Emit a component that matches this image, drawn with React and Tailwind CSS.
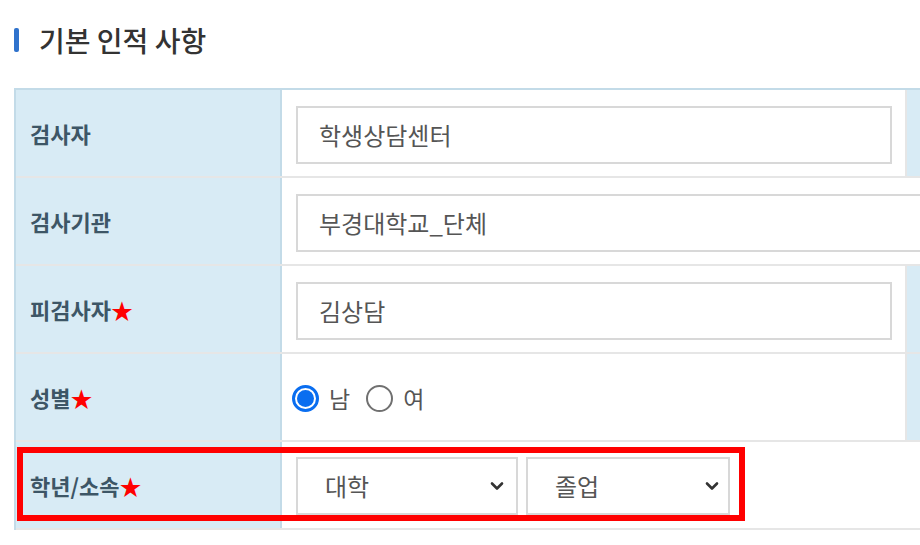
import React, { useState } from 'react';

const font = { fontFamily: '"Malgun Gothic", "Noto Sans CJK KR", "Noto Sans", sans-serif' };

function Label({ text, required }) {
  return (
    <div className="w-[266px] shrink-0 bg-[#d8ebf5] border-r-2 border-[#c3dbe8] flex items-center pl-[14px] text-[22px] font-bold text-[#3d5666]">
      {text}
      {required && <span className="text-[#ff0000] text-[22px] leading-none">★</span>}
    </div>
  );
}

function Chevron() {
  return (
    <svg width="14" height="10" viewBox="0 0 14 10" className="shrink-0">
      <path d="M2 2.5 L7 7.5 L12 2.5" fill="none" stroke="#333" strokeWidth="2.6" strokeLinecap="round" strokeLinejoin="round" />
    </svg>
  );
}

function Radio({ checked, onClick }) {
  return (
    <button onClick={onClick} className="w-[27px] h-[27px] flex items-center justify-center">
      {checked ? (
        <span className="w-[27px] h-[27px] rounded-full border-[3px] border-[#0a6ef0] flex items-center justify-center">
          <span className="w-[17px] h-[17px] rounded-full bg-[#0a6ef0]" />
        </span>
      ) : (
        <span className="w-[27px] h-[27px] rounded-full border-[2.5px] border-[#707070] bg-white" />
      )}
    </button>
  );
}

export default function App() {
  const [gender, setGender] = useState('M');

  return (
    <div className="w-[920px] h-[545px] overflow-hidden bg-white relative" style={font}>
      {/* Title */}
      <div className="flex items-start pl-[14px] pt-[26px] h-[88px]">
        <div className="flex items-center gap-[20px]">
          <span className="w-[5px] h-[24px] bg-[#2f72cc] rounded-[2px]" />
          <h2 className="text-[28px] font-medium text-[#333] leading-none">기본 인적 사항</h2>
        </div>
      </div>

      {/* Table */}
      <div className="ml-[14px] w-[1000px] border-t-2 border-l-2 border-[#c3dbe8]">
        {/* row 1 */}
        <div className="flex h-[88px] border-b-2 border-[#e6e6e6]">
          <Label text="검사자" />
          <div className="flex items-center pl-[14px] pt-[3px] w-[625px] border-r-2 border-[#e6e6e6]">
            <div className="w-[596px] h-[58px] border-2 border-[#d8d8d8] flex items-center pl-[21px] text-[24px] text-[#555]">학생상담센터</div>
          </div>
          <div className="flex-1 bg-[#d8ebf5]" />
        </div>
        {/* row 2 */}
        <div className="flex h-[88px] border-b-2 border-[#e6e6e6]">
          <Label text="검사기관" />
          <div className="flex items-center pl-[14px] pt-[3px] flex-1">
            <div className="w-[700px] h-[58px] border-2 border-[#d8d8d8] flex items-center pl-[21px] text-[24px] text-[#555]">부경대학교_단체</div>
          </div>
        </div>
        {/* row 3 */}
        <div className="flex h-[88px] border-b-2 border-[#e6e6e6]">
          <Label text="피검사자" required />
          <div className="flex items-center pl-[14px] pt-[3px] w-[625px] border-r-2 border-[#e6e6e6]">
            <div className="w-[596px] h-[58px] border-2 border-[#d8d8d8] flex items-center pl-[21px] text-[24px] text-[#555]">김상담</div>
          </div>
          <div className="flex-1 bg-[#d8ebf5]" />
        </div>
        {/* row 4 */}
        <div className="flex h-[88px] border-b-2 border-[#e6e6e6]">
          <Label text="성별" required />
          <div className="flex items-center pl-[10px] pt-[3px] w-[625px] border-r-2 border-[#e6e6e6] text-[23px] text-[#555]">
            <Radio checked={gender === 'M'} onClick={() => setGender('M')} />
            <span className="ml-[10px]">남</span>
            <span className="ml-[16px] flex"><Radio checked={gender === 'F'} onClick={() => setGender('F')} /></span>
            <span className="ml-[10px]">여</span>
          </div>
          <div className="flex-1 bg-[#d8ebf5]" />
        </div>
        {/* row 5 */}
        <div className="flex h-[88px] border-b-2 border-[#e6e6e6] relative">
          <Label text="학년/소속" required />
          <div className="flex items-center pl-[14px] pt-[2px] gap-[8px] flex-1">
            <div className="w-[222px] h-[58px] border-2 border-[#d8d8d8] flex items-center justify-between pl-[27px] pr-[12px] text-[24px] text-[#555]">
              <span>대학</span>
              <Chevron />
            </div>
            <div className="w-[204px] h-[58px] border-2 border-[#d8d8d8] flex items-center justify-between pl-[27px] pr-[9px] text-[24px] text-[#555]">
              <span>졸업</span>
              <Chevron />
            </div>
          </div>
          <div className="absolute left-[1px] top-[5px] w-[728px] h-[74px] border-[6px] border-[#ff0000] pointer-events-none" />
        </div>
      </div>
    </div>
  );
}
